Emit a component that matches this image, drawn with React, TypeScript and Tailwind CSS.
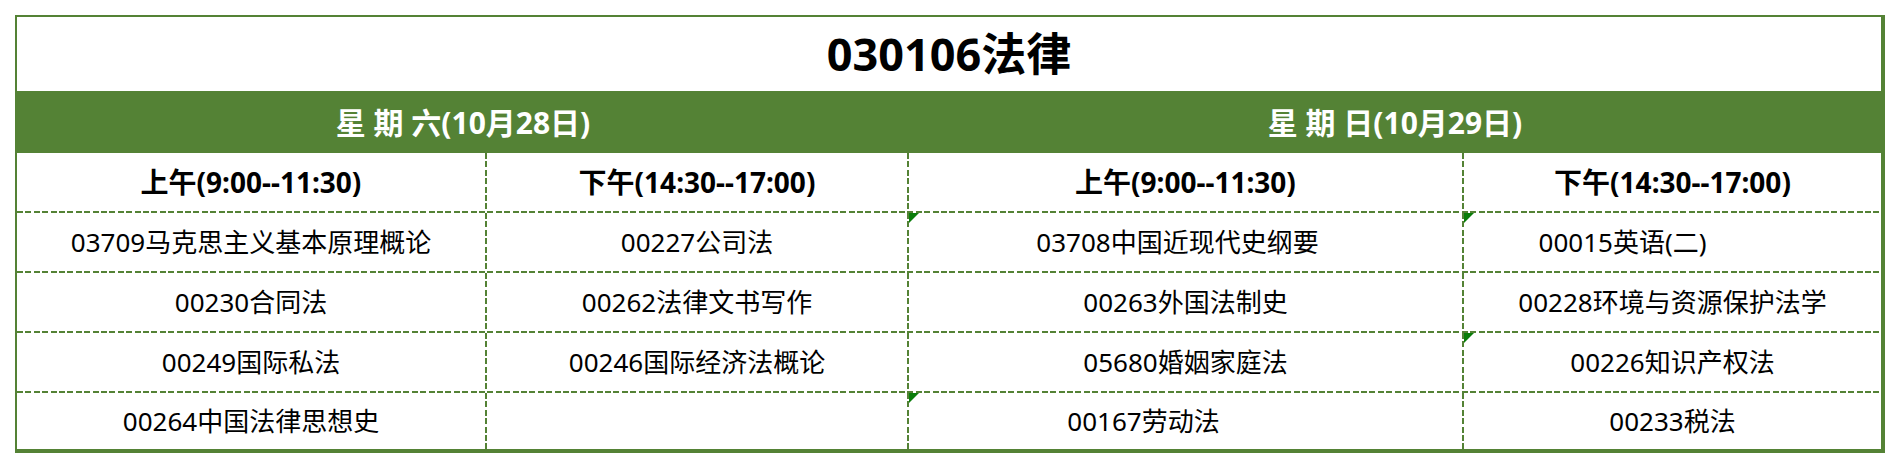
import React from "react";

const HDash = () => (
  <div className="h-[2px] w-full bg-[repeating-linear-gradient(90deg,#548235_0px,#548235_6px,transparent_6px,transparent_8.4px)]" />
);

const VDash = () => (
  <div className="w-[2px] h-full bg-[repeating-linear-gradient(180deg,#548235_0px,#548235_6px,transparent_6px,transparent_8.4px)]" />
);

const Tri = () => (
  <svg className="absolute left-0 top-0" width="10" height="10" viewBox="0 0 10 10">
    <polygon points="0,0 10,0 0,10" fill="#0a7d0a" />
  </svg>
);

type Cell = { t: string; tri?: boolean; pr?: string };

const rows: Cell[][] = [
  [
    { t: "03709马克思主义基本原理概论" },
    { t: "00227公司法" },
    { t: "03708中国近现代史纲要", tri: true, pr: "pr-[16px]" },
    { t: "00015英语(二)", tri: true, pr: "pr-[100px]" },
  ],
  [
    { t: "00230合同法" },
    { t: "00262法律文书写作" },
    { t: "00263外国法制史" },
    { t: "00228环境与资源保护法学" },
  ],
  [
    { t: "00249国际私法" },
    { t: "00246国际经济法概论" },
    { t: "05680婚姻家庭法" },
    { t: "00226知识产权法", tri: true },
  ],
  [
    { t: "00264中国法律思想史" },
    { t: "" },
    { t: "00167劳动法", tri: true, pr: "pr-[84px]" },
    { t: "00233税法" },
  ],
];

const headers = ["上午(9:00--11:30)", "下午(14:30--17:00)", "上午(9:00--11:30)", "下午(14:30--17:00)"];

function Row({ cells, h, header }: { cells: Cell[]; h: string; header?: boolean }) {
  return (
    <div className={`grid grid-cols-[468px_2px_420px_2px_553px_2px_417px] ${h}`}>
      {cells.map((c, i) => (
        <React.Fragment key={i}>
          {i > 0 && <VDash />}
          <div
            className={`relative flex items-center justify-center ${c.pr ?? ""} ${
              header ? "text-[28px] font-bold" : "text-[26px]"
            } text-black whitespace-nowrap`}
          >
            {c.tri && <Tri />}
            {c.t}
          </div>
        </React.Fragment>
      ))}
    </div>
  );
}

export default function App() {
  return (
    <div
      className="w-[1900px] h-[468px] bg-white pt-[15px] pl-[15px]"
      style={{ fontFamily: '"Noto Sans", "Noto Sans CJK SC", sans-serif' }}
    >
      <div className="w-[1870px] border-t-2 border-l-2 border-r-4 border-b-4 border-[#548235] flex flex-col">
        <div className="h-[74px] flex items-center justify-center text-[45px] font-bold text-black">
          030106法律
        </div>
        <div className="h-[62px] bg-[#548235] grid grid-cols-[892px_972px] text-white text-[30px] font-bold">
          <div className="flex items-center justify-center">星 期 六(10月28日)</div>
          <div className="flex items-center justify-center">星 期 日(10月29日)</div>
        </div>
        <Row cells={headers.map((t) => ({ t }))} h="h-[58px]" header />
        {rows.map((r, i) => (
          <React.Fragment key={i}>
            <HDash />
            <Row cells={r} h={i === 3 ? "h-[56px]" : "h-[58px]"} />
          </React.Fragment>
        ))}
      </div>
    </div>
  );
}
